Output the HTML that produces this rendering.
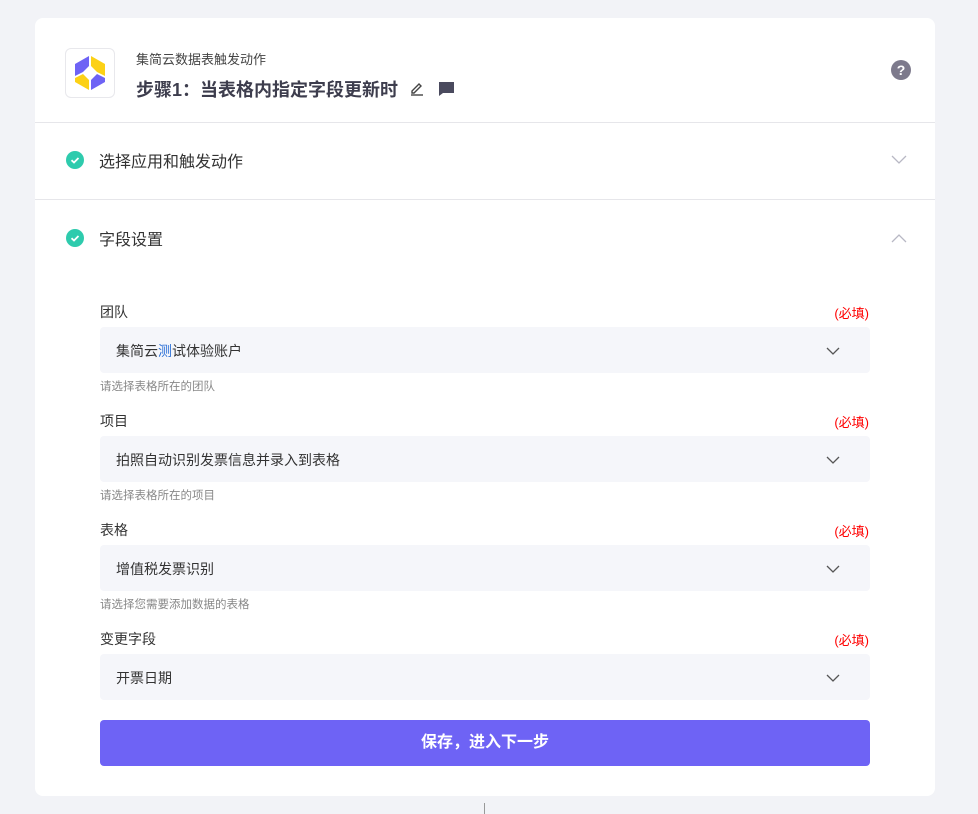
<!DOCTYPE html>
<html><head><meta charset="utf-8"><style>
*{margin:0;padding:0;box-sizing:border-box}
body{width:978px;height:814px;background:#f2f3f7;font-family:"Liberation Sans","Noto Sans CJK SC",sans-serif;position:relative;overflow:hidden;color:#333}
.card{position:absolute;left:35px;top:18px;width:900px;height:778px;background:#fff;border-radius:8px}
.abs{position:absolute}
.logo{left:30px;top:30px;width:50px;height:50px;border:1px solid #e8e8ec;border-radius:6px;background:#fff}
.t1{left:101px;top:31px;font-size:13px;color:#444}
.t2{left:101px;top:58px;font-size:18px;font-weight:bold;color:#3d3d4d}
.hr{left:0;width:900px;height:1px;background:#e6e6ea}
.sec{left:64px;font-size:16px;color:#333}
.chk{left:31px;width:18px;height:18px;border-radius:50%;background:#2ecbad}
.lbl{left:65px;font-size:14px;color:#333}
.req{right:66px;font-size:13px;color:#f00}
.sel{left:65px;width:770px;height:46px;background:#f5f6fa;border-radius:4px;font-size:14px;color:#333;padding:14px 16px}
.hint{left:65px;font-size:11.5px;color:#888}
.btn{left:65px;top:702px;width:770px;height:46px;background:#6e63f5;border-radius:4px;color:#fff;font-size:16px;font-weight:bold;text-align:center;line-height:46px}
</style></head><body>
<div class="card">
<div class="abs logo"><svg width="50" height="50" viewBox="0 0 50 50" style="position:absolute;left:-1px;top:-1px">
<polygon points="10,16 24,8 24,18 18,24 10,28" fill="#6e63f5"/>
<polygon points="10,30 18,26 24,32 24,42 10,34" fill="#fcd116"/>
<polygon points="26,8 40,16 40,28 32,24 26,18" fill="#fcd116"/>
<polygon points="40,30 40,34 26,42 26,32 32,26" fill="#6e63f5"/>
</svg></div>
<div class="abs t1">集简云数据表触发动作</div>
<div class="abs t2">步骤1：当表格内指定字段更新时</div>
<svg class="abs" style="left:374px;top:62px" width="16" height="16" viewBox="0 0 16 16"><path d="M3 11 L10 4 L12 6 L5 13 H3 Z" fill="none" stroke="#444" stroke-width="1.4"/><path d="M2 15H14" stroke="#444" stroke-width="1.4"/></svg>
<svg class="abs" style="left:403px;top:63px" width="17" height="16" viewBox="0 0 17 16"><path d="M1 1H16V12H5L1 15Z" fill="#4a4a5e"/></svg>
<div class="abs" style="left:856px;top:42px;width:20px;height:20px;border-radius:50%;background:#7d7a8c;color:#fff;font-size:14px;font-weight:bold;text-align:center;line-height:20px">?</div>
<div class="abs hr" style="top:104px"></div>
<div class="abs chk" style="top:133px"><svg width="18" height="18"><path d="M5.5 9.2L8 11.5L12.5 7" stroke="#fff" stroke-width="1.8" fill="none"/></svg></div>
<div class="abs sec" style="top:130px">选择应用和触发动作</div>
<svg class="abs" style="left:856px;top:137px" width="16" height="10"><path d="M1 1L8 8L15 1" stroke="#b8b8c4" stroke-width="1.3" fill="none"/></svg>
<div class="abs hr" style="top:181px"></div>
<div class="abs chk" style="top:211px"><svg width="18" height="18"><path d="M5.5 9.2L8 11.5L12.5 7" stroke="#fff" stroke-width="1.8" fill="none"/></svg></div>
<div class="abs sec" style="top:208px">字段设置</div>
<svg class="abs" style="left:856px;top:215px" width="16" height="10"><path d="M1 9L8 2L15 9" stroke="#b8b8c4" stroke-width="1.3" fill="none"/></svg>

<div class="abs lbl" style="top:284px">团队</div><div class="abs req" style="top:285px">(必填)</div>
<div class="abs sel" style="top:309px">集简云<span style="color:#2a6fd6">测</span>试体验账户</div><svg class="abs" style="left:791px;top:329px" width="14" height="8"><path d="M1 1L7 7L13 1" stroke="#555" stroke-width="1.3" fill="none"/></svg>
<div class="abs hint" style="top:360px">请选择表格所在的团队</div>

<div class="abs lbl" style="top:393px">项目</div><div class="abs req" style="top:394px">(必填)</div>
<div class="abs sel" style="top:418px">拍照自动识别发票信息并录入到表格</div><svg class="abs" style="left:791px;top:438px" width="14" height="8"><path d="M1 1L7 7L13 1" stroke="#555" stroke-width="1.3" fill="none"/></svg>
<div class="abs hint" style="top:469px">请选择表格所在的项目</div>

<div class="abs lbl" style="top:502px">表格</div><div class="abs req" style="top:503px">(必填)</div>
<div class="abs sel" style="top:527px">增值税发票识别</div><svg class="abs" style="left:791px;top:547px" width="14" height="8"><path d="M1 1L7 7L13 1" stroke="#555" stroke-width="1.3" fill="none"/></svg>
<div class="abs hint" style="top:578px">请选择您需要添加数据的表格</div>

<div class="abs lbl" style="top:611px">变更字段</div><div class="abs req" style="top:612px">(必填)</div>
<div class="abs sel" style="top:636px">开票日期</div><svg class="abs" style="left:791px;top:656px" width="14" height="8"><path d="M1 1L7 7L13 1" stroke="#555" stroke-width="1.3" fill="none"/></svg>

<div class="abs btn">保存，进入下一步</div>
</div>
<div class="abs" style="left:484px;top:803px;width:1px;height:11px;background:#999"></div>
</body></html>
